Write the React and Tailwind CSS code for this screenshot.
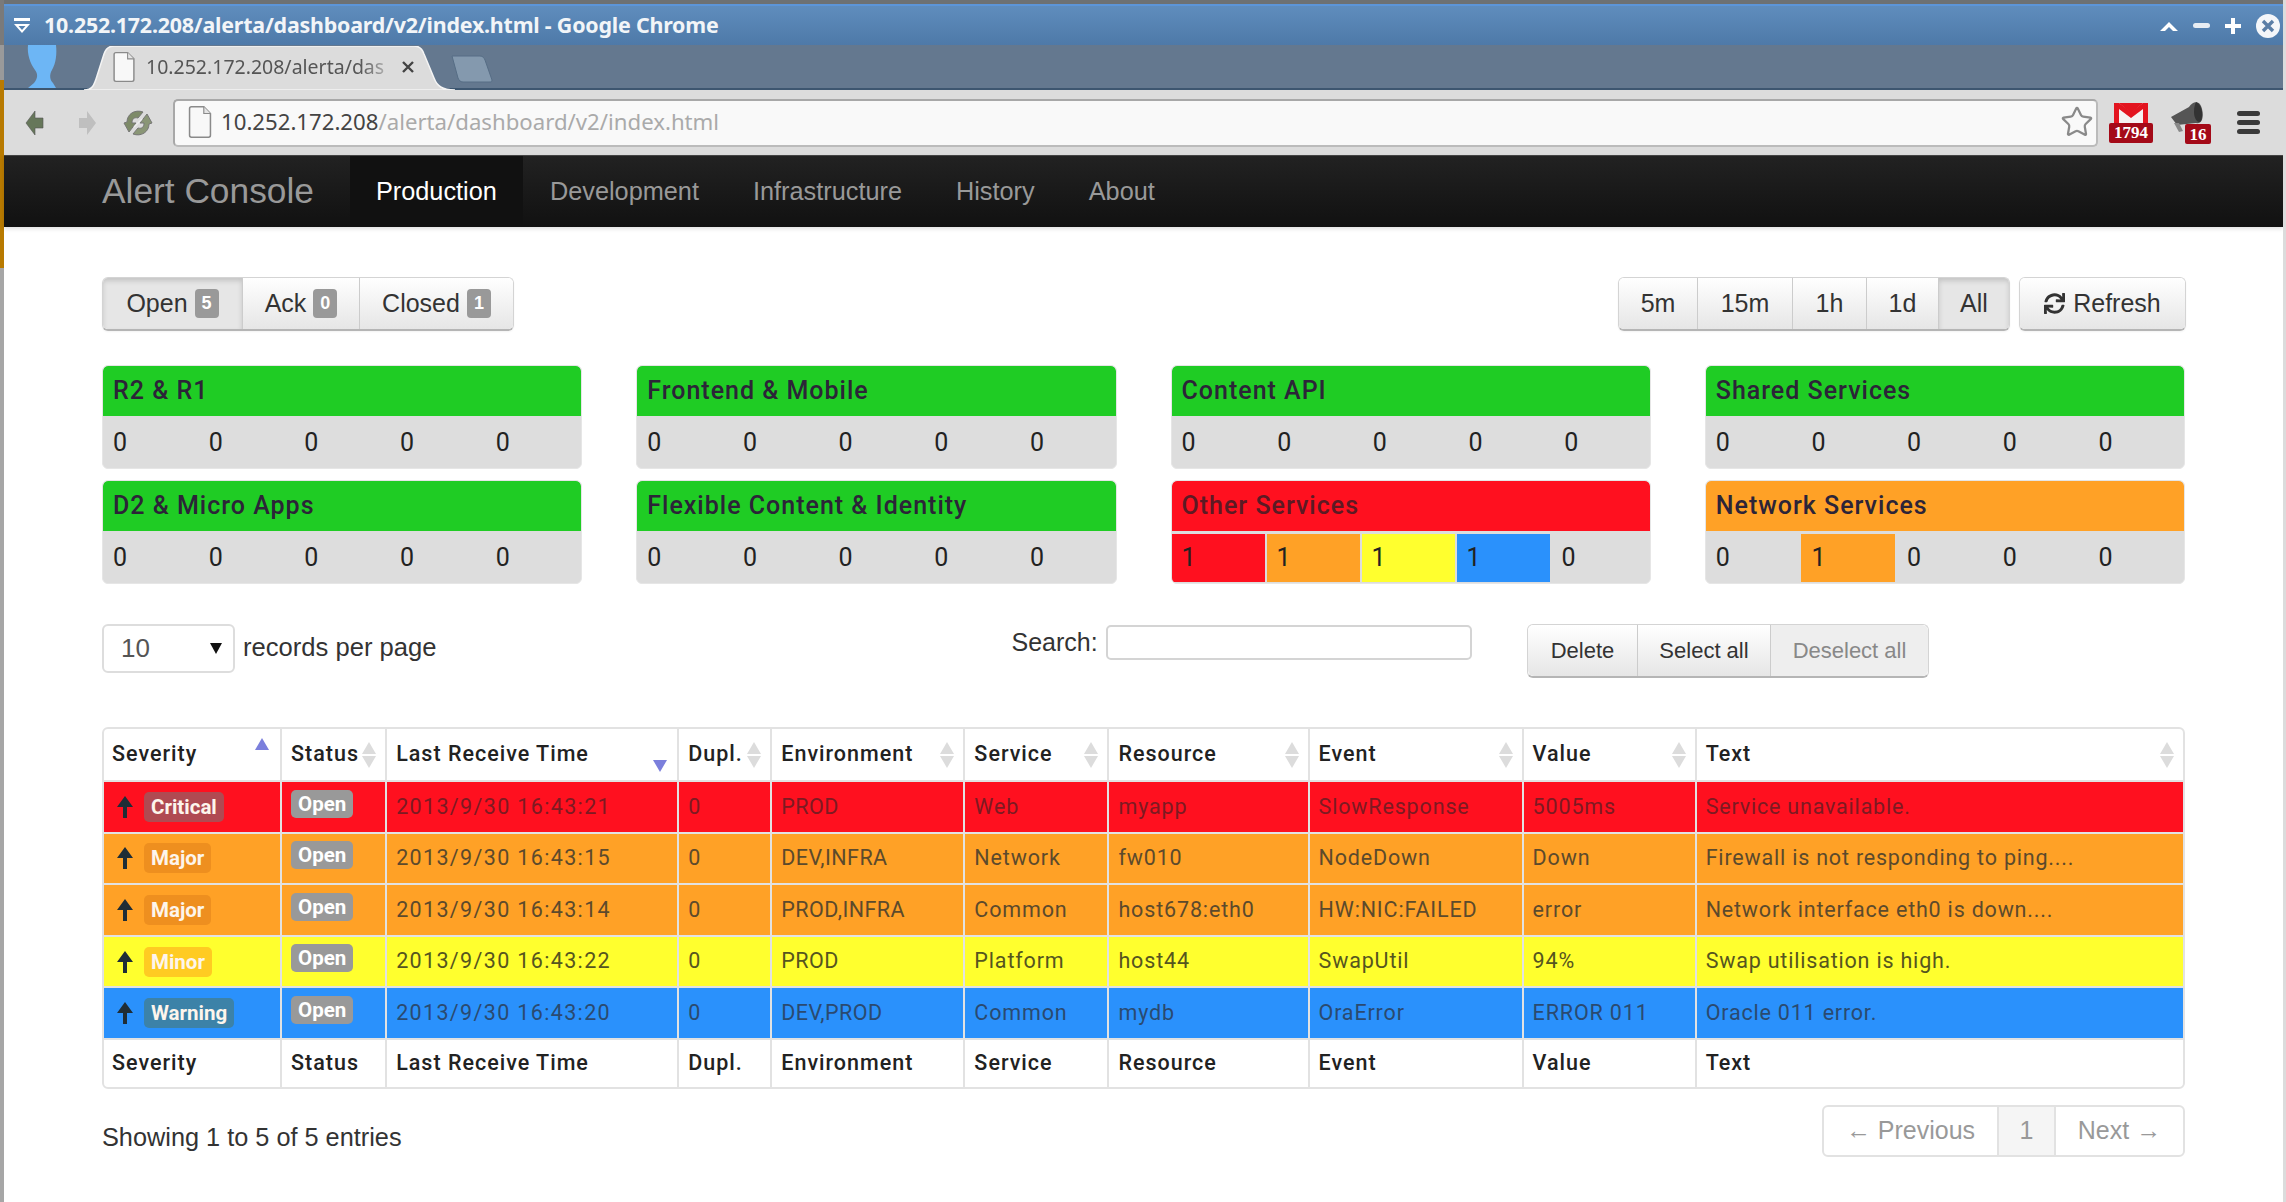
import React from 'react';
import { FaSync } from 'react-icons/fa';
import { Star } from 'lucide-react';

const SANS = "font-['Liberation_Sans',Arial,sans-serif]";
const TABLE_FONT = "font-['Roboto',sans-serif]";

const COLS = [176, 105, 292, 93, 193, 144, 200, 214, 173, 488];
const HEADERS = ['Severity', 'Status', 'Last Receive Time', 'Dupl.', 'Environment', 'Service', 'Resource', 'Event', 'Value', 'Text'];

// letter spacing per data column: the digits of the time column run wider
const CELL_TRACK = ['tracking-[1.35px]', 'tracking-[0.85px]', 'tracking-[0.45px]', 'tracking-[0.85px]', 'tracking-[0.85px]', 'tracking-[0.85px]', 'tracking-[0.85px]', 'tracking-[0.8px]'];

const ROWS = [
  { sev: 'Critical', bg: 'bg-[#ff101f]', text: 'text-[#7d1a22]', badge: 'bg-[#b04a52]', cells: ['2013/9/30 16:43:21', '0', 'PROD', 'Web', 'myapp', 'SlowResponse', '5005ms', 'Service unavailable.'] },
  { sev: 'Major', bg: 'bg-[#ffa126]', text: 'text-[#5c4a2c]', badge: 'bg-[#ee8f1f]', cells: ['2013/9/30 16:43:15', '0', 'DEV,INFRA', 'Network', 'fw010', 'NodeDown', 'Down', 'Firewall is not responding to ping....'] },
  { sev: 'Major', bg: 'bg-[#ffa126]', text: 'text-[#5c4a2c]', badge: 'bg-[#ee8f1f]', cells: ['2013/9/30 16:43:14', '0', 'PROD,INFRA', 'Common', 'host678:eth0', 'HW:NIC:FAILED', 'error', 'Network interface eth0 is down....'] },
  { sev: 'Minor', bg: 'bg-[#ffff2e]', text: 'text-[#55551f]', badge: 'bg-[#ffcb22]', cells: ['2013/9/30 16:43:22', '0', 'PROD', 'Platform', 'host44', 'SwapUtil', '94%', 'Swap utilisation is high.'] },
  { sev: 'Warning', bg: 'bg-[#2a91fc]', text: 'text-[#2a4a70]', badge: 'bg-[#3c82a8]', cells: ['2013/9/30 16:43:20', '0', 'DEV,PROD', 'Common', 'mydb', 'OraError', 'ERROR 011', 'Oracle 011 error.'] },
];

const PANELS = [
  { name: 'R2 & R1', head: 'bg-[#1fcc24]', counts: [0, 0, 0, 0, 0] },
  { name: 'Frontend & Mobile', head: 'bg-[#1fcc24]', counts: [0, 0, 0, 0, 0] },
  { name: 'Content API', head: 'bg-[#1fcc24]', counts: [0, 0, 0, 0, 0] },
  { name: 'Shared Services', head: 'bg-[#1fcc24]', counts: [0, 0, 0, 0, 0] },
  { name: 'D2 & Micro Apps', head: 'bg-[#1fcc24]', counts: [0, 0, 0, 0, 0] },
  { name: 'Flexible Content & Identity', head: 'bg-[#1fcc24]', counts: [0, 0, 0, 0, 0] },
  { name: 'Other Services', head: 'bg-[#ff101f]', counts: [1, 1, 1, 1, 0], titleColor: 'text-[#5c1a24]', cellW: 'w-[93px]' },
  { name: 'Network Services', head: 'bg-[#ffa126]', counts: [0, 1, 0, 0, 0] },
];

// severity colour for a non-zero count, by column
const COUNT_BG = ['bg-[#ff101f]', 'bg-[#ffa126]', 'bg-[#ffff2e]', 'bg-[#2a91fc]', 'bg-[#dddddd]'];

const btnClass = 'flex items-center justify-center bg-gradient-to-b from-white to-[#e6e6e6] text-[#333] border-l border-[#ccc] first:border-l-0';
const btnActive = 'flex items-center justify-center bg-[#e6e6e6] shadow-[inset_0_3px_5px_rgba(0,0,0,0.15)] text-[#333] border-l border-[#ccc] first:border-l-0';
const groupClass = 'flex h-[54px] rounded-[6px] border border-[#d4d4d4] border-b-[#b5b5b5] border-b-2 overflow-hidden shadow-[0_1px_2px_rgba(0,0,0,0.05)]';

function CountBadge({ n }) {
  return <span className="ml-[7px] inline-flex h-[29px] w-[24px] items-center justify-center rounded-[4px] bg-[#999] text-[18px] font-bold text-white">{n}</span>;
}

function SortIcon({ up = true, down = true, upColor = '#dcdcdc', downColor = '#dcdcdc' }) {
  return (
    <svg width="16" height="26" viewBox="0 0 16 26" className="shrink-0">
      {up && <path d="M8 0 L15 12 L1 12 Z" fill={upColor} />}
      {down && <path d="M1 14 L15 14 L8 26 Z" fill={downColor} />}
    </svg>
  );
}

function ArrowUp() {
  return (
    <svg width="18" height="22" viewBox="0 0 18 22" className="shrink-0">
      <path d="M9 0 L17 11 L11 11 L11 22 L7 22 L7 11 L1 11 Z" fill="#1f2d36" />
    </svg>
  );
}

function PageIcon({ className }) {
  return (
    <svg width="26" height="34" viewBox="0 0 26 34" className={className}>
      <path d="M2 3 Q2 1 4 1 L17 1 L24 8 L24 31 Q24 33 22 33 L4 33 Q2 33 2 31 Z" fill="#f8f8f8" stroke="#8a8a8a" strokeWidth="1.6" />
      <path d="M17 1 L17 8 L24 8" fill="#e4e4e4" stroke="#8a8a8a" strokeWidth="1.2" />
    </svg>
  );
}

function ChromeBar() {
  return (
    <>
      <div className="h-[4px] bg-[#6d7173]" />
      {/* title bar */}
      <div className="flex h-[41px] items-center border-t-2 border-[#5c95d8] bg-gradient-to-b from-[#5f8dbd] to-[#4e79a8] pl-[8px] pr-[2px]">
        <svg width="20" height="20" viewBox="0 0 20 20" className="mr-[12px] shrink-0">
          <rect x="2" y="2" width="16" height="3" fill="#fff" />
          <path d="M2 8 L18 8 L10 17 Z M6.5 10 L10 14 L13.5 10 Z" fill="#fff" fillRule="evenodd" />
        </svg>
        <span className="font-['Noto_Sans',sans-serif] text-[21.4px] font-bold tracking-[-0.2px] text-[#f2f5f8]">10.252.172.208/alerta/dashboard/v2/index.html - Google Chrome</span>
        <div className="ml-auto flex items-center gap-[13px]">
          <svg width="20" height="14" viewBox="0 0 20 14"><path d="M1 12 L10 3 L19 12 L14 12 L10 8 L6 12 Z" fill="#fff" /></svg>
          <div className="mx-[1px] h-[5px] w-[17px] rounded-sm bg-[#e8edf3]" />
          <svg width="18" height="18" viewBox="0 0 18 18"><path d="M7 1 H11 V7 H17 V11 H11 V17 H7 V11 H1 V7 H7 Z" fill="#fff" /></svg>
          <svg width="26" height="26" viewBox="0 0 26 26">
            <circle cx="13" cy="13" r="12" fill="#f4f6f9" />
            <path d="M8 8 L18 18 M18 8 L8 18" stroke="#5b7ea6" strokeWidth="3.4" />
          </svg>
        </div>
      </div>
      {/* tab strip */}
      <div className="flex h-[45px] items-end border-b-2 border-[#3d5670] bg-[#64788f] pl-[23px]">
        <svg width="30" height="43" viewBox="0 0 30 43" className="shrink-0">
          <path d="M1 0 L29 0 C30 9 29 18 25 25 C22 30 23 35 26 38 L29 43 L1 43 L7 38 C11 33 11 29 8 25 C3 18 0 9 1 0 Z" fill="#6db6f5" />
        </svg>
        <div className="relative ml-[27px] flex h-[42px] w-[371px] items-center pl-[27px]">
          <svg width="371" height="44" viewBox="0 0 371 44" className="absolute inset-x-0 top-0">
            <path d="M0 44 C8 44 10 40 13 30 L20 8 C22 2 25 0 30 0 L330 0 C335 0 338 2 340 8 L350 32 C353 40 358 44 371 44 Z" fill="#dcdcdc" stroke="#f4f4f4" strokeWidth="1.5" />
          </svg>
          <PageIcon className="relative shrink-0 scale-90" />
          <span className="relative ml-[9px] w-[252px] whitespace-nowrap font-['Noto_Sans',sans-serif] text-[19.5px] text-[#555] [mask-image:linear-gradient(to_right,#000_85%,transparent)]">10.252.172.208/alerta/das</span>
          <svg width="14" height="14" viewBox="0 0 14 14" className="relative ml-[3px] shrink-0"><path d="M2 2 L12 12 M12 2 L2 12" stroke="#444" strokeWidth="2.4" /></svg>
        </div>
        <svg width="44" height="28" viewBox="0 0 44 28" className="mb-[5px] -ml-[5px] shrink-0">
          <path d="M2 1 L30 1 C33 1 34 3 35 5 L42 25 C42 27 41 27 39 27 L13 27 C10 27 9 25 8 23 Z" fill="#8499ae" stroke="#566d85" strokeWidth="1" />
        </svg>
      </div>
      {/* toolbar */}
      <div className="flex h-[65px] items-center bg-[#dcdcdc] pl-[21px]">
        <svg width="20" height="26" viewBox="0 0 20 26" className="shrink-0"><path d="M18 8 L10 8 L10 1 L1 13 L10 25 L10 18 L18 18 Z" fill="#66775a" stroke="#555" strokeWidth="0.6" /></svg>
        <svg width="20" height="26" viewBox="0 0 20 26" className="ml-[32px] shrink-0"><path d="M2 8 L10 8 L10 1 L19 13 L10 25 L10 18 L2 18 Z" fill="#bfbfbf" /></svg>
        <svg width="30" height="30" viewBox="0 0 30 30" className="ml-[26px] shrink-0">
          <path d="M4 14 C4 6 12 1 20 4 L15 10 C11 9 9 11 9 15 L13 15 L6 24 L1 15 Z" fill="#7d8a68" stroke="#777" strokeWidth="1" />
          <path d="M26 16 C26 24 18 29 10 26 L15 20 C19 21 21 19 21 15 L17 15 L24 6 L29 15 Z" fill="#8a9676" stroke="#777" strokeWidth="1" />
          <path d="M11 19 L19 11" stroke="#eee" strokeWidth="1.4" />
        </svg>
        <div className="ml-[20px] flex h-[48px] w-[1925px] items-center rounded-[5px] border-2 border-[#a8a8a8] border-b-[#bbb] border-r-[#bbb] bg-[#f9f9f9] pb-[1px] pl-[12px] pr-[2px]">
          <PageIcon className="shrink-0 scale-95" />
          <span className="ml-[8px] font-['Noto_Sans',sans-serif] text-[22.2px] text-[#444]">10.252.172.208<span className="text-[#aaa]">/alerta/dashboard/v2/index.html</span></span>
          <Star size={34} strokeWidth={1.6} className="ml-auto text-[#8a8a8a]" />
        </div>
        <div className="relative ml-[11px] h-[40px] w-[44px] shrink-0">
          <svg width="34" height="21" viewBox="0 0 34 21" className="absolute left-[5px] top-0">
            <rect width="34" height="21" fill="#e3141f" />
            <path d="M5 0 L17 10 L29 0 L29 21 L5 21 Z" fill="#f5f1f1" />
            <path d="M5 0 L5 6 L17 15 L29 6 L29 0 L17 9 Z" fill="#e3141f" />
          </svg>
          <div className="absolute bottom-0 left-0 flex h-[20px] w-[44px] items-center justify-center rounded-[2px] bg-[#a40a18] font-['Liberation_Serif',serif] text-[17px] font-bold leading-none text-white">1794</div>
        </div>
        <div className="relative ml-[16px] h-[43px] w-[42px] shrink-0">
          <svg width="36" height="32" viewBox="0 0 36 32" className="absolute left-0 top-0">
            <path d="M2 16 L20 6 C24 0 31 -1 33 8 C35 16 33 24 27 22 L8 24 Z" fill="#555" />
            <path d="M27 1 C32 3 35 12 32 20 C29 23 25 18 25 11 C25 6 26 3 27 1 Z" fill="#333" />
            <path d="M5 22 L10 31 L14 30 L10 22 Z" fill="#888" />
          </svg>
          <div className="absolute bottom-0 right-0 flex h-[20px] w-[26px] items-center justify-center rounded-[2px] bg-[#a40a18] font-['Liberation_Serif',serif] text-[17px] font-bold leading-none text-white">16</div>
        </div>
        <div className="ml-[26px] flex shrink-0 flex-col gap-[4px]">
          <div className="h-[5px] w-[23px] rounded-sm bg-[#3a3a3a]" />
          <div className="h-[5px] w-[23px] rounded-sm bg-[#3a3a3a]" />
          <div className="h-[5px] w-[23px] rounded-sm bg-[#3a3a3a]" />
        </div>
      </div>
    </>
  );
}

function NavBar() {
  const items = ['Development', 'Infrastructure', 'History', 'About'];
  return (
    <div className="flex h-[72px] items-stretch border-t border-[#444] bg-gradient-to-b from-[#222] to-[#111] pl-[98px] shadow-[0_2px_4px_rgba(0,0,0,0.12)]">
      <div className="flex items-center pr-[36px] text-[35.3px] text-[#999]">Alert Console</div>
      <div className="flex w-[173px] items-center justify-center bg-[#111] text-[25.3px] text-white">Production</div>
      {items.map((item) => (
        <div key={item} className="flex items-center px-[27px] text-[25.3px] text-[#999]">{item}</div>
      ))}
    </div>
  );
}

function Panel({ panel }) {
  return (
    <div className="h-[104px] overflow-hidden rounded-[6px] border border-[#e6e6e6] bg-[#dddddd]">
      <div className={`flex h-[50px] items-center rounded-t-[5px] pl-[10px] ${panel.head}`}>
        <span className={`${TABLE_FONT} text-[25px] font-medium tracking-[1px] ${panel.titleColor || 'text-[#2c2438]'}`}>{panel.name}</span>
      </div>
      <div className="flex h-[53px] items-center">
        {panel.counts.map((c, i) => (
          <div key={i} className={`mr-[2px] flex h-[48px] items-center pl-[10px] ${panel.cellW || 'w-[94px]'} ${TABLE_FONT} text-[25px] text-[#222] ${c > 0 ? COUNT_BG[i] : ''}`}>{c}</div>
        ))}
      </div>
    </div>
  );
}

function AlertsTable() {
  return (
    <div className={`mt-[49px] overflow-hidden rounded-[6px] border-2 border-[#e2e2e2] ${TABLE_FONT}`}>
      <table className="w-full table-fixed border-separate border-spacing-0 text-[21.5px]">
        <colgroup>
          {COLS.map((w, i) => <col key={i} style={{ width: w }} />)}
        </colgroup>
        <thead>
          <tr className="h-[51px]">
            {HEADERS.map((h, i) => (
              <th key={h} className="border-l-2 border-[#e2e2e2] pl-[9px] pr-[8px] text-left font-medium tracking-[1px] text-[#222] first:border-l-0 first:pl-[8px]">
                <div className="flex items-center justify-between">
                  <span>{h}</span>
                  {i === 0 && <span className="-mt-[8px] mr-[2px] flex"><SortIcon down={false} upColor="#7b7fdc" /></span>}
                  {i === 2 && <span className="mr-[1px] mt-[8px] flex"><SortIcon up={false} downColor="#7b7fdc" /></span>}
                  {i !== 0 && i !== 2 && <SortIcon />}
                </div>
              </th>
            ))}
          </tr>
        </thead>
        <tbody>
          {ROWS.map((r, ri) => (
            <tr key={ri} className="h-[51.6px]">
              <td className={`border-t-2 border-[#e2e2e2] pl-[12px] pr-[8px] ${r.bg}`}>
                <div className="flex items-center gap-[10px]">
                  <ArrowUp />
                  <span className={`rounded-[5px] px-[7px] py-[2px] text-[20.5px] font-bold leading-[26px] text-[#fdf5ec] ${r.badge}`}>{r.sev}</span>
                </div>
              </td>
              <td className={`border-l-2 border-t-2 border-[#e2e2e2] pl-[9px] pr-[8px] ${r.bg}`}>
                <span className="relative -top-[3px] rounded-[5px] bg-[#999] px-[7px] py-[2px] text-[20.5px] font-bold text-white">Open</span>
              </td>
              {r.cells.map((c, i) => (
                <td key={i} className={`whitespace-nowrap border-l-2 border-t-2 border-[#e2e2e2] pl-[9px] pr-[8px] ${CELL_TRACK[i]} ${r.bg} ${r.text}`}>{c}</td>
              ))}
            </tr>
          ))}
        </tbody>
        <tfoot>
          <tr className="h-[49px]">
            {HEADERS.map((h) => (
              <th key={h} className="border-l-2 border-t-2 border-[#e2e2e2] pl-[9px] pr-[8px] text-left font-medium tracking-[1px] text-[#222] first:border-l-0 first:pl-[8px]">{h}</th>
            ))}
          </tr>
        </tfoot>
      </table>
    </div>
  );
}

export default function App() {
  return (
    <div className={`flex h-[1202px] w-full overflow-hidden bg-white ${SANS}`}>
      {/* sliver of desktop left of the window */}
      <div className="flex w-[4px] shrink-0 flex-col">
        <div className="h-[45px] bg-[#7a7a7a]" />
        <div className="h-[35px] bg-[#9a9a9a]" />
        <div className="h-[188px] bg-[#b87a00]" />
        <div className="flex-1 bg-[#a6a6a6]" />
      </div>

      <div className="flex min-w-0 flex-1 flex-col">
        <ChromeBar />
        <NavBar />

        <div className="px-[98px] pt-[50px] text-[#333]">
          {/* filters */}
          <div className="-mr-[1px] flex justify-between text-[25px]">
            <div className={groupClass}>
              <div className={`${btnActive} w-[139px]`}>Open<CountBadge n={5} /></div>
              <div className={`${btnClass} w-[117px]`}>Ack<CountBadge n={0} /></div>
              <div className={`${btnClass} w-[154px]`}>Closed<CountBadge n={1} /></div>
            </div>
            <div className="flex gap-[9px]">
              <div className={groupClass}>
                <div className={`${btnClass} w-[78px]`}>5m</div>
                <div className={`${btnClass} w-[95px]`}>15m</div>
                <div className={`${btnClass} w-[74px]`}>1h</div>
                <div className={`${btnClass} w-[72px]`}>1d</div>
                <div className={`${btnActive} w-[71px]`}>All</div>
              </div>
              <div className={groupClass}>
                <div className={`${btnClass} w-[165px] gap-[8px]`}><FaSync size={21} />Refresh</div>
              </div>
            </div>
          </div>

          {/* service panels */}
          <div className="mt-[34px] grid grid-cols-4 gap-x-[54px] gap-y-[11px]">
            {PANELS.map((p) => <Panel key={p.name} panel={p} />)}
          </div>

          {/* table controls */}
          <div className="mt-[40px] flex h-[54px] items-start">
            <div className="flex h-[49px] w-[133px] items-center justify-between rounded-[6px] border-2 border-[#ddd] pl-[17px] pr-[11px] text-[26px] text-[#555]">
              10
              <svg width="12" height="11" viewBox="0 0 12 11"><path d="M0 0 L12 0 L6 11 Z" fill="#111" /></svg>
            </div>
            <span className="ml-[8px] mt-[4px] text-[25.6px]">records per page</span>
            <span className="ml-[575px] text-[25px]">Search:</span>
            <input className="ml-[8px] mt-[1px] h-[35px] w-[366px] rounded-[5px] border-2 border-[#d4d4d4] bg-white" />
            <div className="ml-auto flex h-[54px] rounded-[6px] border border-[#d4d4d4] border-b-2 border-b-[#b5b5b5] text-[22px]">
              <div className={`${btnClass} w-[109px] rounded-l-[6px]`}>Delete</div>
              <div className={`${btnClass} w-[133px]`}>Select all</div>
              <div className="flex w-[158px] items-center justify-center rounded-r-[6px] border-l border-[#ccc] bg-[#eeeeee] text-[#888]">Deselect all</div>
            </div>
            <div className="w-[256px] shrink-0" />
          </div>

          <AlertsTable />

          {/* footer */}
          <div className="mt-[16px] flex items-start justify-between">
            <span className="mt-[14px] text-[25.3px]">Showing 1 to 5 of 5 entries</span>
            <div className="flex h-[52px] rounded-[6px] border-2 border-[#e2e2e2] text-[25px] text-[#999]">
              <div className="flex w-[173px] items-center justify-center">← Previous</div>
              <div className="flex w-[59px] items-center justify-center border-x-2 border-[#e2e2e2] bg-[#f5f5f5]">1</div>
              <div className="flex w-[127px] items-center justify-center">Next →</div>
            </div>
          </div>
        </div>
      </div>

      {/* right edge of the window */}
      <div className="w-[3px] shrink-0 bg-[#dcdcdc]" />
    </div>
  );
}
